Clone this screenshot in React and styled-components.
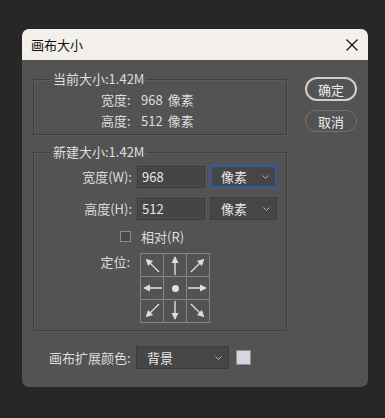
import React from 'react';
import styled, { createGlobalStyle } from 'styled-components';

const GlobalStyle = createGlobalStyle`
  html, body {
    margin: 0;
    background: #272727;
  }
  body {
    font-family: "Noto Sans CJK SC", "Noto Sans", sans-serif;
    font-size: 13px;
    color: #dcdcdc;
  }
`;

const Screen = styled.div`
  width: 385px;
  height: 418px;
  padding: 29px 0 0 22px;
  box-sizing: border-box;
`;

const Dialog = styled.div`
  width: 346px;
  height: 358px;
  border-radius: 7px;
  overflow: hidden;
  background: #535353;
  display: flex;
  flex-direction: column;
`;

const TitleBar = styled.div`
  height: 31px;
  flex: none;
  background: #f3efea;
  color: #111;
  display: flex;
  align-items: center;
  justify-content: space-between;
  padding: 0 10px 0 9px;
  font-size: 13px;
`;

const CloseIcon = styled.svg`
  width: 12px;
  height: 12px;
  display: block;
`;

const Body = styled.div`
  display: flex;
  flex-direction: column;
  padding: 0 11px;
`;

const Top = styled.div`
  display: flex;
  gap: 18px;
`;

const Groups = styled.div`
  width: 254px;
  display: flex;
  flex-direction: column;
`;

const Group = styled.fieldset`
  margin: ${p => p.$top}px 0 0 0;
  padding: ${p => p.$pad};
  border: 1px solid #3f3f3f;
  box-shadow: inset 1px 1px 0 #5c5c5c, 1px 1px 0 #5c5c5c;
  min-width: 0;
  display: flex;
  flex-direction: column;
`;

const Legend = styled.legend`
  margin-left: 16px;
  padding: 0 3px;
  line-height: 16px;
  font-size: 13px;
  color: #dedede;
`;

const InfoRow = styled.div`
  display: flex;
  align-items: center;
  height: 21px;
  padding-left: 67px;
`;

const InfoLabel = styled.span`
  width: 40px;
`;

const InfoUnit = styled.span`
  margin-left: 5px;
`;

const FieldRow = styled.div`
  display: flex;
  align-items: center;
  gap: 5px;
  margin-top: ${p => p.$top}px;
`;

const FieldLabel = styled.span`
  width: 98px;
  text-align: right;
`;

const Input = styled.div`
  width: 68px;
  height: 22px;
  box-sizing: border-box;
  background: #454545;
  border: 1px solid #3a3a3a;
  box-shadow: inset 0 0 0 1px #4c4c4c;
  padding-left: 4px;
  display: flex;
  align-items: center;
  color: #e6e6e6;
`;

const Select = styled.div`
  width: ${p => p.$w}px;
  height: 23px;
  box-sizing: border-box;
  background: #464646;
  border: ${p => (p.$focus ? '2px solid #2c5c9e' : '1px solid #3c3c3c')};
  padding: 0 6px 0 ${p => (p.$focus ? 9 : 10)}px;
  display: flex;
  align-items: center;
  justify-content: space-between;
  color: #e6e6e6;
`;

const Chevron = styled.svg`
  width: 7px;
  height: 4px;
  display: block;
`;

const CheckRow = styled.div`
  display: flex;
  align-items: center;
  gap: 10px;
  height: 16px;
  padding-left: 86px;
  margin-top: 8px;
`;

const Checkbox = styled.span`
  width: 11px;
  height: 11px;
  box-sizing: border-box;
  border: 1px solid #8c8c8c;
  background: #474747;
`;

const AnchorRow = styled.div`
  display: flex;
  align-items: flex-start;
  gap: 10px;
  margin-top: 9px;
`;

const AnchorLabel = styled.span`
  width: 96px;
  text-align: right;
  line-height: 18px;
`;

const AnchorGrid = styled.div`
  display: grid;
  grid-template-columns: repeat(3, 22px);
  grid-template-rows: repeat(3, 22px);
  gap: 1px;
  padding: 1px;
  background: #858585;
`;

const Cell = styled.div`
  background: #535353;
  display: flex;
  align-items: center;
  justify-content: center;
`;

const ArrowSvg = styled.svg`
  width: 22px;
  height: 22px;
  display: block;
  transform: rotate(${p => p.$rot}deg);
`;

const Dot = styled.span`
  width: 7px;
  height: 7px;
  border-radius: 50%;
  background: #dedede;
`;

const Buttons = styled.div`
  display: flex;
  flex-direction: column;
  gap: 9px;
  margin-top: 17px;
`;

const Button = styled.div`
  width: 52px;
  height: ${p => (p.$primary ? 24 : 22)}px;
  box-sizing: border-box;
  border-radius: 12px;
  border: ${p => (p.$primary ? '2px solid #cfcfcf' : '1.5px solid #727272')};
  display: flex;
  align-items: center;
  justify-content: center;
  color: #ececec;
  font-size: 13px;
`;

const Footer = styled.div`
  display: flex;
  align-items: center;
  margin-top: 15px;
  padding-left: 16px;
`;

const FooterLabel = styled.span`
  width: 87px;
`;

const Swatch = styled.span`
  width: 15px;
  height: 15px;
  box-sizing: border-box;
  margin-left: 7px;
  background: #d9d5e0;
  border: 1px solid #8f8f8f;
`;

const Arrow = ({ rot }) => (
  <ArrowSvg viewBox="0 0 22 22" $rot={rot}>
    <line x1="11" y1="8" x2="11" y2="21" stroke="#dedede" strokeWidth="1.4" />
    <polygon points="11,2 7.5,9 14.5,9" fill="#dedede" />
  </ArrowSvg>
);

const Down = () => (
  <Chevron viewBox="0 0 7 4">
    <polyline points="0.5,0.5 3.5,3.5 6.5,0.5" fill="none" stroke="#b4b4b4" strokeWidth="1" />
  </Chevron>
);

const anchors = [-45, 0, 45, -90, null, 90, -135, 180, 135];

const App = () => (
  <Screen>
    <GlobalStyle />
    <Dialog>
      <TitleBar>
        <span>画布大小</span>
        <CloseIcon viewBox="0 0 12 12">
          <path d="M0.5 0.5 L11.5 11.5 M11.5 0.5 L0.5 11.5" stroke="#111" strokeWidth="1.2" />
        </CloseIcon>
      </TitleBar>
      <Body>
        <Top>
          <Groups>
            <Group $top={11} $pad="2px 0 3px 0">
              <Legend>当前大小:1.42M</Legend>
              <InfoRow>
                <InfoLabel>宽度:</InfoLabel>
                <span>968</span>
                <InfoUnit>像素</InfoUnit>
              </InfoRow>
              <InfoRow>
                <InfoLabel>高度:</InfoLabel>
                <span>512</span>
                <InfoUnit>像素</InfoUnit>
              </InfoRow>
            </Group>
            <Group $top={9} $pad="0 0 7px 0">
              <Legend>新建大小:1.42M</Legend>
              <FieldRow $top={5}>
                <FieldLabel>宽度(W):</FieldLabel>
                <Input>968</Input>
                <Select $w={67} $focus>
                  <span>像素</span>
                  <Down />
                </Select>
              </FieldRow>
              <FieldRow $top={9}>
                <FieldLabel>高度(H):</FieldLabel>
                <Input>512</Input>
                <Select $w={67}>
                  <span>像素</span>
                  <Down />
                </Select>
              </FieldRow>
              <CheckRow>
                <Checkbox />
                <span>相对(R)</span>
              </CheckRow>
              <AnchorRow>
                <AnchorLabel>定位:</AnchorLabel>
                <AnchorGrid>
                  {anchors.map((rot, i) => (
                    <Cell key={i}>{rot === null ? <Dot /> : <Arrow rot={rot} />}</Cell>
                  ))}
                </AnchorGrid>
              </AnchorRow>
            </Group>
          </Groups>
          <Buttons>
            <Button $primary>确定</Button>
            <Button>取消</Button>
          </Buttons>
        </Top>
        <Footer>
          <FooterLabel>画布扩展颜色:</FooterLabel>
          <Select $w={93}>
            <span>背景</span>
            <Down />
          </Select>
          <Swatch />
        </Footer>
      </Body>
    </Dialog>
  </Screen>
);

export default App;
